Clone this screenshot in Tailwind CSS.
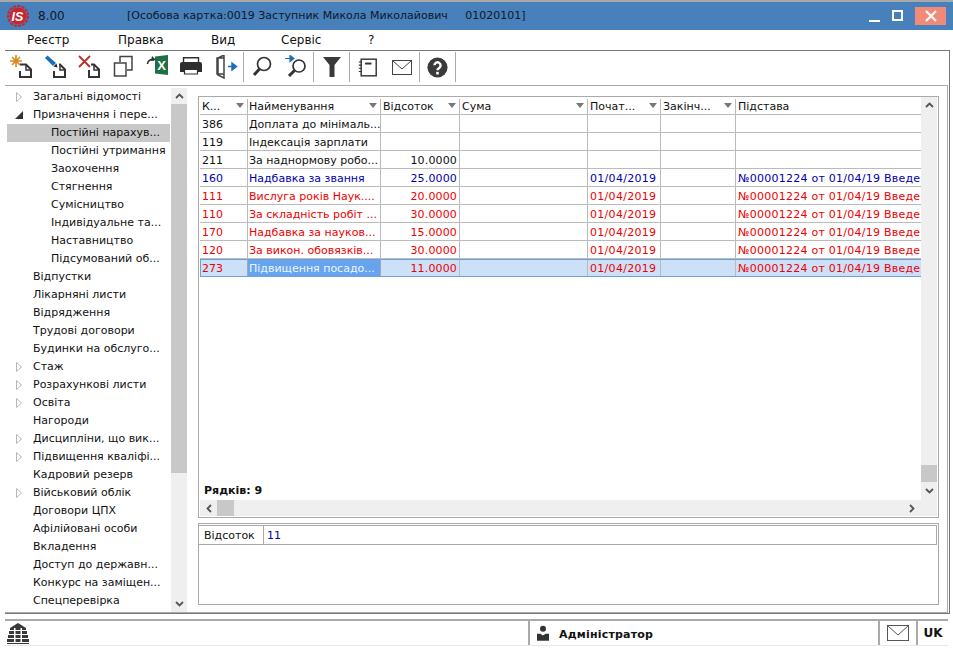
<!DOCTYPE html>
<html lang="uk">
<head>
<meta charset="UTF-8">
<title>Особова картка</title>
<script src="https://cdn.jsdelivr.net/npm/@tailwindcss/browser@4"></script>
</head>
<body class="w-[953px] h-[649px] overflow-hidden bg-white text-black font-['DejaVu_Sans',sans-serif] text-[11px] leading-[18px]">

<!-- title bar -->
<div class="h-[30px] border-t-2 border-[#a8a8a8] bg-[#4780bb] flex items-center pb-[1px] text-[#101828]">
  <svg class="ml-[7px] w-[22px] h-[22px]" viewBox="0 0 22 22">
    <circle cx="11" cy="11" r="10" fill="none" stroke="#c8242b" stroke-width="2" stroke-dasharray="3 1.2"/>
    <circle cx="11" cy="11" r="8.5" fill="#c8242b"/>
    <text x="10.500" y="15.500" text-anchor="middle" font-family="Liberation Sans" font-size="12.500" font-weight="bold" font-style="italic" fill="#fff">IS</text>
  </svg>
  <span class="ml-[9px] w-[89px] text-[12px]">8.00</span>
  <span class="whitespace-pre">[Особова картка:0019 Заступник Микола Миколайович     01020101]</span>
  <div class="ml-auto flex items-center">
    <div class="w-[11px] h-[2px] bg-white mt-[10px]"></div>
    <div class="ml-[12px] w-[11px] h-[11px] border-2 border-white"></div>
    <div class="ml-[12px] mr-[7px] w-[31px] h-[18px] bg-[#f28a7a] flex items-center justify-center">
      <svg class="w-[12px] h-[12px]" viewBox="0 0 12 12"><path d="M1 1l10 10M11 1 1 11" stroke="#fff" stroke-width="2"/></svg>
    </div>
  </div>
</div>

<!-- menu -->
<div class="h-[20px] flex items-center text-[12px] text-[#111]">
  <span class="ml-[27px] w-[91px]">Реєстр</span>
  <span class="w-[93px]">Правка</span>
  <span class="w-[70px]">Вид</span>
  <span class="w-[87px]">Сервіс</span>
  <span>?</span>
</div>

<!-- frame -->
<div class="ml-[5px] w-[945px] h-[564px] border-t border-r border-b border-[#777] flex flex-col">
  <!-- toolbar -->
  <div class="h-[34px] shrink-0 flex items-start pt-[1px]">
    <div class="w-[34px] h-[30px] flex items-center justify-center">
      <svg class="w-[24px] h-[24px]" viewBox="0 0 24 24"><path d="M6 0v12M0 6h12M2 2l8 8M10 2l-8 8" stroke="#d98a20" stroke-width="1.600"/><circle cx="6" cy="6" r="2.500" fill="#d98a20"/><path d="M10 9.500h6l5 5v7.500H10v-6" fill="none" stroke="#333" stroke-width="2"/><path d="M16 10v5h5" fill="none" stroke="#333" stroke-width="1.500"/></svg>
    </div>
    <div class="w-[34px] h-[30px] flex items-center justify-center">
      <svg class="w-[24px] h-[24px]" viewBox="0 0 24 24"><path d="M1 3l2.500-2.500L12 8l-3 3z" fill="#1b6fb8"/><path d="M9.500 11.500 12.500 8.500l1 4z" fill="#222"/><path d="M15 9.500h1l5 5v7.500H10v-6" fill="none" stroke="#333" stroke-width="2"/><path d="M16 10v5h5" fill="none" stroke="#333" stroke-width="1.500"/></svg>
    </div>
    <div class="w-[34px] h-[30px] flex items-center justify-center">
      <svg class="w-[24px] h-[24px]" viewBox="0 0 24 24"><path d="M1 1l11 11M12 1 1 12" stroke="#b8322a" stroke-width="1.800"/><path d="M13 9.500h3l5 5v7.500H11v-7" fill="none" stroke="#333" stroke-width="2"/><path d="M16 10v5h5" fill="none" stroke="#333" stroke-width="1.500"/></svg>
    </div>
    <div class="w-[34px] h-[30px] flex items-center justify-center">
      <svg class="w-[24px] h-[24px]" viewBox="0 0 24 24"><path d="M8 7V1.500h12V15h-5" fill="none" stroke="#444" stroke-width="1.500"/><rect x="2.500" y="8" width="11.500" height="13" fill="none" stroke="#444" stroke-width="1.500"/></svg>
    </div>
    <div class="w-[34px] h-[30px] flex items-center justify-center">
      <svg class="w-[24px] h-[24px]" viewBox="0 0 24 24"><path d="M9 1.500 22 0v20L9 18.500z" fill="#1e7145"/><text x="15.500" y="15" text-anchor="middle" font-family="Liberation Sans" font-size="13" font-weight="bold" fill="#fff">X</text><path d="M1.500 9a4.500 4.500 0 0 1 6.500-4" fill="none" stroke="#333" stroke-width="1.600"/><path d="M6 1l4 4-5 1z" fill="#333"/></svg>
    </div>
    <div class="w-[34px] h-[30px] flex items-center justify-center">
      <svg class="w-[24px] h-[24px]" viewBox="0 0 24 24"><path d="M3.500 7V2.700h15V7" fill="none" stroke="#2e2e2e" stroke-width="1.400"/><path d="M0 9a2 2 0 0 1 2-2h18a2 2 0 0 1 2 2v8h-4v-3H4v3H0z" fill="#2e2e2e"/><path d="M4.500 14.500h13v4.500h-13z" fill="none" stroke="#2e2e2e" stroke-width="1.200"/></svg>
    </div>
    <div class="w-[35px] h-[30px] flex items-center justify-center border-r border-[#aaa]">
      <svg class="w-[24px] h-[24px]" viewBox="0 0 24 24"><path d="M10 3H3v16h7M10 0v23l-6-3V3z" fill="none" stroke="#444" stroke-width="1.500"/><path d="M14 11.500h5M18 8l4.500 3.500-4.500 3.500z" fill="#1b6fb8" stroke="#1b6fb8" stroke-width="1.400"/></svg>
    </div>
    <div class="w-[34px] h-[30px] flex items-center justify-center">
      <svg class="w-[24px] h-[24px]" viewBox="0 0 24 24"><circle cx="15" cy="9" r="6.500" fill="none" stroke="#333" stroke-width="1.700"/><path d="M10.500 14 5 20" stroke="#333" stroke-width="3"/></svg>
    </div>
    <div class="w-[36px] h-[30px] flex items-center justify-center border-r border-[#aaa]">
      <svg class="w-[24px] h-[24px]" viewBox="0 0 24 24"><circle cx="15" cy="11" r="6" fill="none" stroke="#333" stroke-width="1.700"/><path d="M10.500 15.500 5 21" stroke="#333" stroke-width="3"/><path d="M1 3.500h5M6 .5l4 3-4 3z" fill="#1b6fb8" stroke="#1b6fb8" stroke-width="1.200"/></svg>
    </div>
    <div class="w-[36px] h-[30px] flex items-center justify-center border-r border-[#aaa]">
      <svg class="w-[18px] h-[20px]" viewBox="0 0 18 20"><path d="M0 0h18l-6.500 8v12h-5V8z" fill="#3a3a3a"/></svg>
    </div>
    <div class="w-[34px] h-[30px] flex items-center justify-center">
      <svg class="w-[19px] h-[19px]" viewBox="0 0 24 24"><rect x="4" y="1.500" width="19" height="21" fill="none" stroke="#333" stroke-width="1.800"/><path d="M1 5h4M1 9h4M1 13h4M1 17h4" stroke="#333" stroke-width="1.300"/><path d="M9 7h8" stroke="#333" stroke-width="2.500"/></svg>
    </div>
    <div class="w-[36px] h-[30px] flex items-center justify-center border-r border-[#aaa]">
      <svg class="w-[20px] h-[15px]" viewBox="0 0 20 15"><rect x=".5" y=".5" width="19" height="14" fill="none" stroke="#444"/><path d="M.5.500 10 9l9.500-8.500" fill="none" stroke="#444"/></svg>
    </div>
    <div class="w-[36px] h-[30px] flex items-center justify-center border-r border-[#aaa]">
      <svg class="w-[21px] h-[21px]" viewBox="0 0 24 24"><circle cx="12" cy="12" r="11.500" fill="#3a3a3a"/><path d="M8.500 9.500a3.500 3.500 0 1 1 5.500 3c-1.200.8-2 1.300-2 2.500" fill="none" stroke="#fff" stroke-width="2.800"/><rect x="10.500" y="17" width="3" height="3" fill="#fff"/></svg>
    </div>
  </div>

  <!-- content frame -->
  <div class="flex-1 mr-[1px] border-t border-r border-b border-[#aaa] flex min-h-0 pt-[2px]">
    <!-- tree -->
    <div class="w-[187px] h-[524px] flex shrink-0 pl-[2px]">
      <div class="w-[163px] text-[#111]">
        <div class="h-[18px] flex items-center pl-[9px]"><svg class="w-[6px] h-[10px]" viewBox="0 0 6 10"><path d="M.5.500 5.500 5 .5 9.500z" fill="none" stroke="#b8b8b8"/></svg><span class="ml-[11px]">Загальні відомості</span></div>
        <div class="h-[18px] flex items-center pl-[8px]"><svg class="w-[8px] h-[8px]" viewBox="0 0 8 8"><path d="M8 0v8H0z" fill="#333"/></svg><span class="ml-[10px]">Призначення і пере...</span></div>
        <div class="h-[18px] pl-[44px] bg-[#c8c8c8]">Постійні нарахув...</div>
        <div class="h-[18px] pl-[44px]">Постійні утримання</div>
        <div class="h-[18px] pl-[44px]">Заохочення</div>
        <div class="h-[18px] pl-[44px]">Стягнення</div>
        <div class="h-[18px] pl-[44px]">Сумісництво</div>
        <div class="h-[18px] pl-[44px]">Індивідуальне та...</div>
        <div class="h-[18px] pl-[44px]">Наставництво</div>
        <div class="h-[18px] pl-[44px]">Підсумований об...</div>
        <div class="h-[18px] pl-[26px]">Відпустки</div>
        <div class="h-[18px] pl-[26px]">Лікарняні листи</div>
        <div class="h-[18px] pl-[26px]">Відрядження</div>
        <div class="h-[18px] pl-[26px]">Трудові договори</div>
        <div class="h-[18px] pl-[26px]">Будинки на обслуго...</div>
        <div class="h-[18px] flex items-center pl-[9px]"><svg class="w-[6px] h-[10px]" viewBox="0 0 6 10"><path d="M.5.500 5.500 5 .5 9.500z" fill="none" stroke="#b8b8b8"/></svg><span class="ml-[11px]">Стаж</span></div>
        <div class="h-[18px] flex items-center pl-[9px]"><svg class="w-[6px] h-[10px]" viewBox="0 0 6 10"><path d="M.5.500 5.500 5 .5 9.500z" fill="none" stroke="#b8b8b8"/></svg><span class="ml-[11px]">Розрахункові листи</span></div>
        <div class="h-[18px] flex items-center pl-[9px]"><svg class="w-[6px] h-[10px]" viewBox="0 0 6 10"><path d="M.5.500 5.500 5 .5 9.500z" fill="none" stroke="#b8b8b8"/></svg><span class="ml-[11px]">Освіта</span></div>
        <div class="h-[18px] pl-[26px]">Нагороди</div>
        <div class="h-[18px] flex items-center pl-[9px]"><svg class="w-[6px] h-[10px]" viewBox="0 0 6 10"><path d="M.5.500 5.500 5 .5 9.500z" fill="none" stroke="#b8b8b8"/></svg><span class="ml-[11px]">Дисципліни, що вик...</span></div>
        <div class="h-[18px] flex items-center pl-[9px]"><svg class="w-[6px] h-[10px]" viewBox="0 0 6 10"><path d="M.5.500 5.500 5 .5 9.500z" fill="none" stroke="#b8b8b8"/></svg><span class="ml-[11px]">Підвищення кваліфі...</span></div>
        <div class="h-[18px] pl-[26px]">Кадровий резерв</div>
        <div class="h-[18px] flex items-center pl-[9px]"><svg class="w-[6px] h-[10px]" viewBox="0 0 6 10"><path d="M.5.500 5.500 5 .5 9.500z" fill="none" stroke="#b8b8b8"/></svg><span class="ml-[11px]">Військовий облік</span></div>
        <div class="h-[18px] pl-[26px]">Договори ЦПХ</div>
        <div class="h-[18px] pl-[26px]">Афілійовані особи</div>
        <div class="h-[18px] pl-[26px]">Вкладення</div>
        <div class="h-[18px] pl-[26px]">Доступ до державн...</div>
        <div class="h-[18px] pl-[26px]">Конкурс на заміщен...</div>
        <div class="h-[18px] pl-[26px]">Спецперевірка</div>
      </div>
      <div class="ml-[1px] w-[16px] bg-[#efefef] flex flex-col items-center">
        <div class="h-[16px] flex items-center"><svg class="w-[9px] h-[6px]" viewBox="0 0 9 6"><path d="M1 5 4.500 1.500 8 5" fill="none" stroke="#555" stroke-width="1.800"/></svg></div>
        <div class="w-full h-[369px] bg-[#c8c8c8]"></div>
        <div class="mt-auto h-[16px] flex items-center"><svg class="w-[9px] h-[6px]" viewBox="0 0 9 6"><path d="M1 1 4.500 4.500 8 1" fill="none" stroke="#555" stroke-width="1.800"/></svg></div>
      </div>
    </div>

    <!-- right side -->
    <div class="ml-[6px] w-[741px] pt-[8px]">
      <!-- grid panel -->
      <div class="w-[741px] h-[422px] border border-[#aaa] pl-[1px] pr-[1px] pb-[1px] flex flex-col">
        <div class="flex h-[403px] shrink-0 min-h-0">
          <div class="w-[721px] overflow-hidden flex flex-col leading-[20px]">
            <div class="flex h-[18px] shrink-0 pt-[2px] border-b border-[#bbb] text-[#111]">
              <div class="w-[48px] pl-[2px] flex justify-between items-center border-r border-[#bbb] pr-[3px]">К...<i class="-mt-[2px] border-x-[4px] border-t-[5px] border-x-transparent border-t-[#777]"></i></div>
              <div class="w-[133px] pl-[1px] flex justify-between items-center border-r border-[#bbb] pr-[3px]">Найменування<i class="-mt-[2px] border-x-[4px] border-t-[5px] border-x-transparent border-t-[#777]"></i></div>
              <div class="w-[79px] pl-[2px] flex justify-between items-center border-r border-[#bbb] pr-[3px]">Відсоток<i class="-mt-[2px] border-x-[4px] border-t-[5px] border-x-transparent border-t-[#777]"></i></div>
              <div class="w-[128px] pl-[2px] flex justify-between items-center border-r border-[#bbb] pr-[3px]">Сума<i class="-mt-[2px] border-x-[4px] border-t-[5px] border-x-transparent border-t-[#777]"></i></div>
              <div class="w-[73px] pl-[2px] flex justify-between items-center border-r border-[#bbb] pr-[3px]">Почат...<i class="-mt-[2px] border-x-[4px] border-t-[5px] border-x-transparent border-t-[#777]"></i></div>
              <div class="w-[75px] pl-[2px] flex justify-between items-center border-r border-[#bbb] pr-[3px]">Закінч...<i class="-mt-[2px] border-x-[4px] border-t-[5px] border-x-transparent border-t-[#777]"></i></div>
              <div class="flex-1 pl-[2px] flex items-center">Підстава</div>
            </div>
            <div class="flex h-[18px] shrink-0 border-b border-[#bbb] text-[#111]">
              <div class="w-[48px] pl-[2px] border-r border-[#bbb]">386</div><div class="w-[133px] pl-[1px] border-r border-[#bbb] whitespace-nowrap">Доплата до мінімаль...</div><div class="w-[79px] border-r border-[#bbb]"></div><div class="w-[128px] border-r border-[#bbb]"></div><div class="w-[73px] border-r border-[#bbb]"></div><div class="w-[75px] border-r border-[#bbb]"></div><div class="flex-1"></div>
            </div>
            <div class="flex h-[18px] shrink-0 border-b border-[#bbb] text-[#111]">
              <div class="w-[48px] pl-[2px] border-r border-[#bbb]">119</div><div class="w-[133px] pl-[1px] border-r border-[#bbb] whitespace-nowrap">Індексація зарплати</div><div class="w-[79px] border-r border-[#bbb]"></div><div class="w-[128px] border-r border-[#bbb]"></div><div class="w-[73px] border-r border-[#bbb]"></div><div class="w-[75px] border-r border-[#bbb]"></div><div class="flex-1"></div>
            </div>
            <div class="flex h-[18px] shrink-0 border-b border-[#bbb] text-[#111]">
              <div class="w-[48px] pl-[2px] border-r border-[#bbb]">211</div><div class="w-[133px] pl-[1px] border-r border-[#bbb] whitespace-nowrap">За наднормову робо...</div><div class="w-[79px] border-r border-[#bbb] text-right pr-[2px] tracking-[0.15px]">10.0000</div><div class="w-[128px] border-r border-[#bbb]"></div><div class="w-[73px] border-r border-[#bbb]"></div><div class="w-[75px] border-r border-[#bbb]"></div><div class="flex-1"></div>
            </div>
            <div class="flex h-[18px] shrink-0 border-b border-[#bbb] text-[#0000b0]">
              <div class="w-[48px] pl-[2px] border-r border-[#bbb]">160</div><div class="w-[133px] pl-[1px] border-r border-[#bbb] whitespace-nowrap">Надбавка за звання</div><div class="w-[79px] border-r border-[#bbb] text-right pr-[2px] tracking-[0.15px]">25.0000</div><div class="w-[128px] border-r border-[#bbb]"></div><div class="w-[73px] pl-[2px] border-r border-[#bbb] tracking-[0.3px]">01/04/2019</div><div class="w-[75px] border-r border-[#bbb]"></div><div class="flex-1 pl-[2px] whitespace-nowrap tracking-[0.25px]">№00001224 от 01/04/19 Введе</div>
            </div>
            <div class="flex h-[18px] shrink-0 border-b border-[#bbb] text-[#f00000]">
              <div class="w-[48px] pl-[2px] border-r border-[#bbb]">111</div><div class="w-[133px] pl-[1px] border-r border-[#bbb] whitespace-nowrap">Вислуга років Наук....</div><div class="w-[79px] border-r border-[#bbb] text-right pr-[2px] tracking-[0.15px]">20.0000</div><div class="w-[128px] border-r border-[#bbb]"></div><div class="w-[73px] pl-[2px] border-r border-[#bbb] tracking-[0.3px]">01/04/2019</div><div class="w-[75px] border-r border-[#bbb]"></div><div class="flex-1 pl-[2px] whitespace-nowrap tracking-[0.25px]">№00001224 от 01/04/19 Введе</div>
            </div>
            <div class="flex h-[18px] shrink-0 border-b border-[#bbb] text-[#f00000]">
              <div class="w-[48px] pl-[2px] border-r border-[#bbb]">110</div><div class="w-[133px] pl-[1px] border-r border-[#bbb] whitespace-nowrap">За складність робіт ...</div><div class="w-[79px] border-r border-[#bbb] text-right pr-[2px] tracking-[0.15px]">30.0000</div><div class="w-[128px] border-r border-[#bbb]"></div><div class="w-[73px] pl-[2px] border-r border-[#bbb] tracking-[0.3px]">01/04/2019</div><div class="w-[75px] border-r border-[#bbb]"></div><div class="flex-1 pl-[2px] whitespace-nowrap tracking-[0.25px]">№00001224 от 01/04/19 Введе</div>
            </div>
            <div class="flex h-[18px] shrink-0 border-b border-[#bbb] text-[#f00000]">
              <div class="w-[48px] pl-[2px] border-r border-[#bbb]">170</div><div class="w-[133px] pl-[1px] border-r border-[#bbb] whitespace-nowrap">Надбавка за науков...</div><div class="w-[79px] border-r border-[#bbb] text-right pr-[2px] tracking-[0.15px]">15.0000</div><div class="w-[128px] border-r border-[#bbb]"></div><div class="w-[73px] pl-[2px] border-r border-[#bbb] tracking-[0.3px]">01/04/2019</div><div class="w-[75px] border-r border-[#bbb]"></div><div class="flex-1 pl-[2px] whitespace-nowrap tracking-[0.25px]">№00001224 от 01/04/19 Введе</div>
            </div>
            <div class="flex h-[18px] shrink-0 border-b border-[#bbb] text-[#f00000]">
              <div class="w-[48px] pl-[2px] border-r border-[#bbb]">120</div><div class="w-[133px] pl-[1px] border-r border-[#bbb] whitespace-nowrap">За викон. обовязків...</div><div class="w-[79px] border-r border-[#bbb] text-right pr-[2px] tracking-[0.15px]">30.0000</div><div class="w-[128px] border-r border-[#bbb]"></div><div class="w-[73px] pl-[2px] border-r border-[#bbb] tracking-[0.3px]">01/04/2019</div><div class="w-[75px] border-r border-[#bbb]"></div><div class="flex-1 pl-[2px] whitespace-nowrap tracking-[0.25px]">№00001224 от 01/04/19 Введе</div>
            </div>
            <div class="flex h-[18px] shrink-0 border-y border-l border-[#6f9fd8] bg-[#cce0f8] text-[#f00000] leading-[18px]">
              <div class="w-[47px] pl-[1px] border-r border-[#9ab]">273</div><div class="w-[133px] pl-[1px] border-r border-[#9ab] bg-[#66a5ee] text-[#eef5ff] whitespace-nowrap">Підвищення посадо...</div><div class="w-[79px] border-r border-[#bbb] text-right pr-[2px] tracking-[0.15px]">11.0000</div><div class="w-[128px] border-r border-[#bbb]"></div><div class="w-[73px] pl-[2px] border-r border-[#bbb] tracking-[0.3px]">01/04/2019</div><div class="w-[75px] border-r border-[#bbb]"></div><div class="flex-1 pl-[2px] whitespace-nowrap tracking-[0.25px]">№00001224 от 01/04/19 Введе</div>
            </div>
            <div class="mt-auto pl-[4px] font-bold text-[#111] leading-[18px]">Рядків: 9</div>
          </div>
          <div class="w-[16px] bg-[#efefef] flex flex-col items-center">
            <div class="h-[16px] flex items-center"><svg class="w-[9px] h-[6px]" viewBox="0 0 9 6"><path d="M1 5 4.500 1.500 8 5" fill="none" stroke="#555" stroke-width="1.800"/></svg></div>
            <div class="mt-auto w-full h-[17px] bg-[#c8c8c8]"></div>
            <div class="h-[18px] flex items-center"><svg class="w-[9px] h-[6px]" viewBox="0 0 9 6"><path d="M1 1 4.500 4.500 8 1" fill="none" stroke="#555" stroke-width="1.800"/></svg></div>
          </div>
        </div>
        <div class="h-[16px] shrink-0 bg-[#efefef] flex items-center">
          <div class="w-[17px] flex justify-center"><svg class="w-[6px] h-[9px]" viewBox="0 0 6 9"><path d="M5 1 1.500 4.500 5 8" fill="none" stroke="#555" stroke-width="1.800"/></svg></div>
          <div class="w-[17px] h-full bg-[#c8c8c8]"></div>
          <div class="ml-auto mr-[22px] flex"><svg class="w-[6px] h-[9px]" viewBox="0 0 6 9"><path d="M1 1 4.500 4.500 1 8" fill="none" stroke="#555" stroke-width="1.800"/></svg></div>
        </div>
      </div>
      <!-- detail panel -->
      <div class="mt-[5px] w-[741px] h-[82px] border border-[#aaa] pt-[1px] pr-[1px]">
        <div class="flex h-[20px] border-y border-r border-[#aaa] leading-[20px]">
          <div class="w-[65px] pl-[5px] border-r border-[#aaa] text-[#111]">Відсоток</div>
          <div class="flex-1 pl-[3px] text-[#0000b0]">11</div>
        </div>
      </div>
    </div>
  </div>
</div>

<!-- status bar -->
<div class="mt-[5px] ml-[5px] mr-[5px] h-[27px] border-t-2 border-b border-t-[#aaa] border-b-[#e8e8e8] flex items-stretch">
  <div class="w-[525px] flex items-center pl-[2px] border-r-2 border-[#aaa]">
    <svg class="w-[22px] h-[21px]" viewBox="0 0 22 21" fill="#3a3a3a"><path d="M11 0 3 5v2h16V5z"/><path d="M2 8h18v3H2zM1 12h20v3H1zM0 16h22v3H0z"/><path d="M7 5h1.500v14H7zM13.500 5H15v14h-1.500z" fill="#fff"/><path d="M0 20h22v1H0z"/></svg>
  </div>
  <div class="w-[348px] flex items-center pl-[7px]">
    <svg class="w-[12px] h-[16px]" viewBox="0 0 14 18" fill="#333"><circle cx="7" cy="4" r="3.500"/><path d="M0 10h4l3 2 3-2h4v8H0z"/></svg>
    <span class="ml-[10px] mt-[3px] font-bold text-[#111] tracking-[0.2px]">Адміністратор</span>
  </div>
  <div class="w-[40px] flex items-center justify-center border-x-2 border-[#aaa]">
    <svg class="w-[22px] h-[16px]" viewBox="0 0 22 16"><rect x=".5" y=".5" width="21" height="15" fill="none" stroke="#555"/><path d="M.5.500 11 10 21.500.500" fill="none" stroke="#555"/></svg>
  </div>
  <div class="flex-1 flex items-center justify-center font-bold text-[12px] text-[#111]">UK</div>
</div>
</body>
</html>
